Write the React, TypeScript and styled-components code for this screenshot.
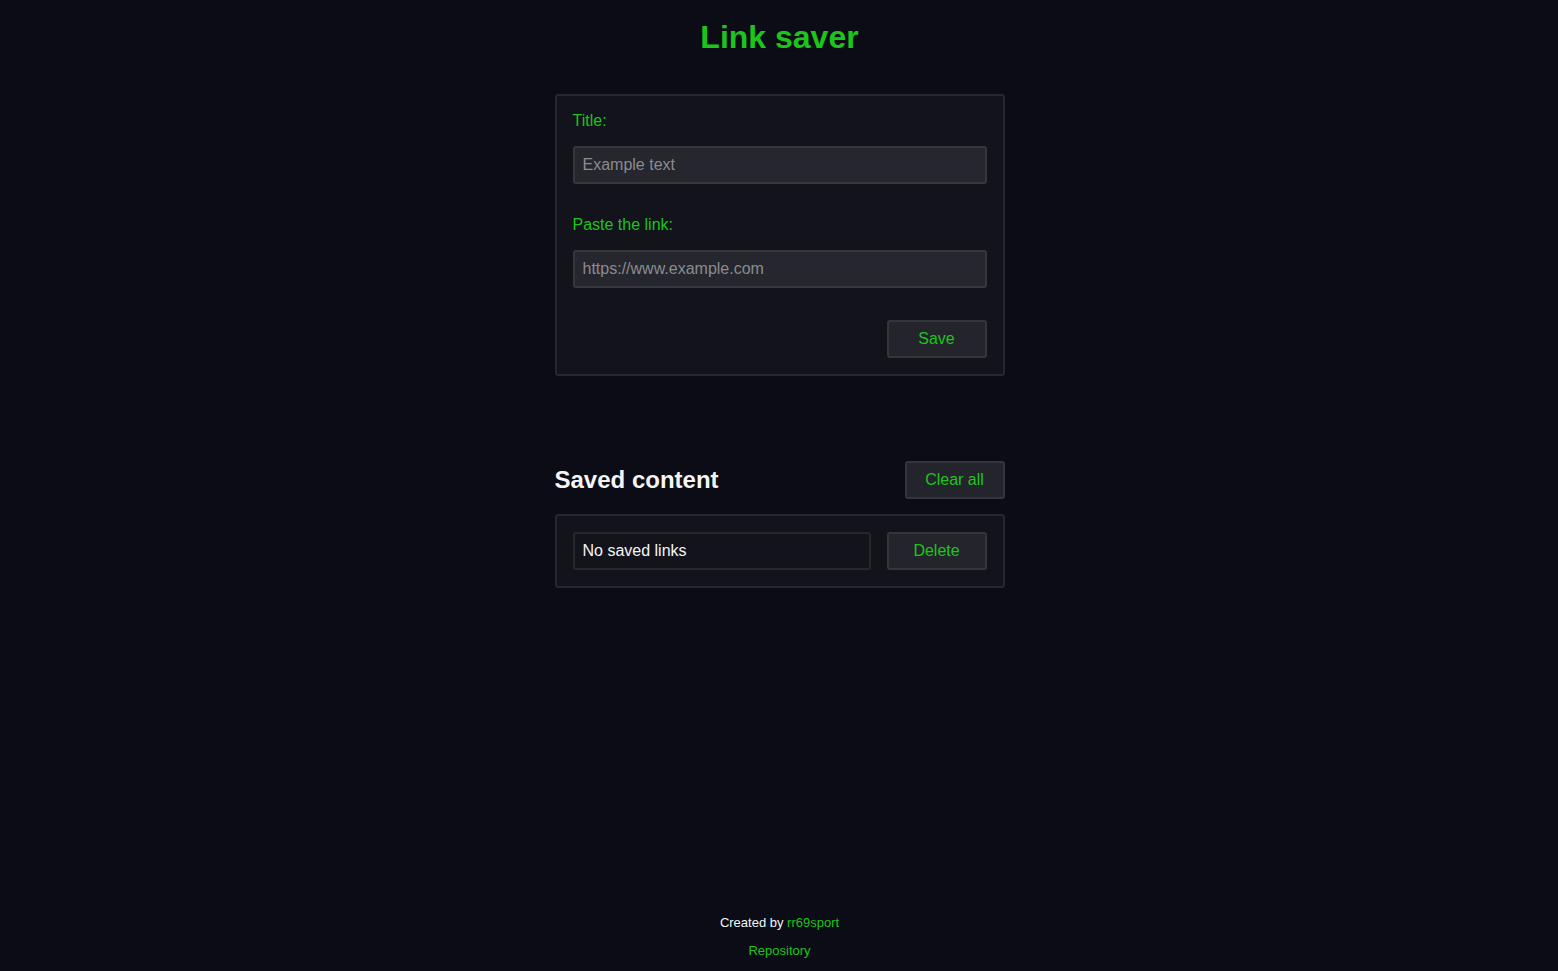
import React from "react";
import styled, { createGlobalStyle } from "styled-components";

const GREEN = "#1cc41c";

const Global = createGlobalStyle`
  html, body { margin: 0; padding: 0; background: #0b0c15; }
  body { font-family: "Liberation Sans", Arial, sans-serif; color: #f2f2f2; }
  * { box-sizing: border-box; }
`;

const Page = styled.div`
  min-height: 100vh;
  padding-left: 1px;
  display: flex;
  flex-direction: column;
  align-items: center;
`;

const Main = styled.main`
  width: 450px;
  flex: 1;
  display: flex;
  flex-direction: column;
`;

const Title = styled.h1`
  margin: 16px 0 36px;
  text-align: center;
  font-family: "Liberation Sans", Arial, sans-serif;
  font-size: 32px;
  line-height: 42px;
  font-weight: 700;
  color: ${GREEN};
`;

const Card = styled.section`
  background: #12131b;
  border: 2px solid #27282e;
  border-radius: 3px;
  padding: 16px;
  display: flex;
  flex-direction: column;
`;

const Label = styled.label`
  font-size: 16px;
  line-height: 18px;
  color: ${GREEN};
  margin-bottom: 16px;
`;

const Input = styled.input`
  height: 38px;
  width: 100%;
  background: #25262e;
  border: 2px solid #36373d;
  border-radius: 3px;
  padding: 0 8px;
  font-family: "Liberation Sans", Arial, sans-serif;
  font-size: 16px;
  color: #f2f2f2;
  margin-bottom: 32px;
  outline: none;
  &::placeholder { color: #8b8b90; }
`;

const Actions = styled.div`
  display: flex;
  justify-content: flex-end;
`;

const Button = styled.button`
  width: 100px;
  height: 38px;
  background: #24252c;
  border: 2px solid #35363c;
  border-radius: 3px;
  color: ${GREEN};
  font-family: "Liberation Sans", Arial, sans-serif;
  font-size: 16px;
  cursor: pointer;
  flex-shrink: 0;
`;

const SavedHeader = styled.div`
  margin-top: 85px;
  margin-bottom: 15px;
  display: flex;
  align-items: center;
  justify-content: space-between;
`;

const SubTitle = styled.h2`
  margin: 0;
  font-size: 24px;
  line-height: 28px;
  font-weight: 700;
  color: #f5f5f5;
`;

const ListCard = styled(Card)`
  flex-direction: row;
  gap: 16px;
`;

const Item = styled.div`
  flex: 1;
  height: 38px;
  border: 2px solid #27282e;
  border-radius: 3px;
  display: flex;
  align-items: center;
  padding: 0 8px;
  font-size: 16px;
  color: #f5f5f5;
`;

const Footer = styled.footer`
  display: flex;
  flex-direction: column;
  align-items: center;
  gap: 13px;
  padding-bottom: 13px;
  font-size: 13px;
  line-height: 15px;
  color: #f5f5f5;
`;

const Link = styled.a`
  color: ${GREEN};
  text-decoration: none;
`;

export default function App() {
  return (
    <>
      <Global />
      <Page>
        <Main>
          <Title>Link saver</Title>
          <Card as="form" onSubmit={(e: React.FormEvent) => e.preventDefault()}>
            <Label htmlFor="title">Title:</Label>
            <Input id="title" placeholder="Example text" />
            <Label htmlFor="link">Paste the link:</Label>
            <Input id="link" placeholder="https://www.example.com" />
            <Actions>
              <Button type="submit">Save</Button>
            </Actions>
          </Card>
          <SavedHeader>
            <SubTitle>Saved content</SubTitle>
            <Button>Clear all</Button>
          </SavedHeader>
          <ListCard>
            <Item>No saved links</Item>
            <Button>Delete</Button>
          </ListCard>
        </Main>
        <Footer>
          <div>
            Created by <Link href="#">rr69sport</Link>
          </div>
          <Link href="#">Repository</Link>
        </Footer>
      </Page>
    </>
  );
}
